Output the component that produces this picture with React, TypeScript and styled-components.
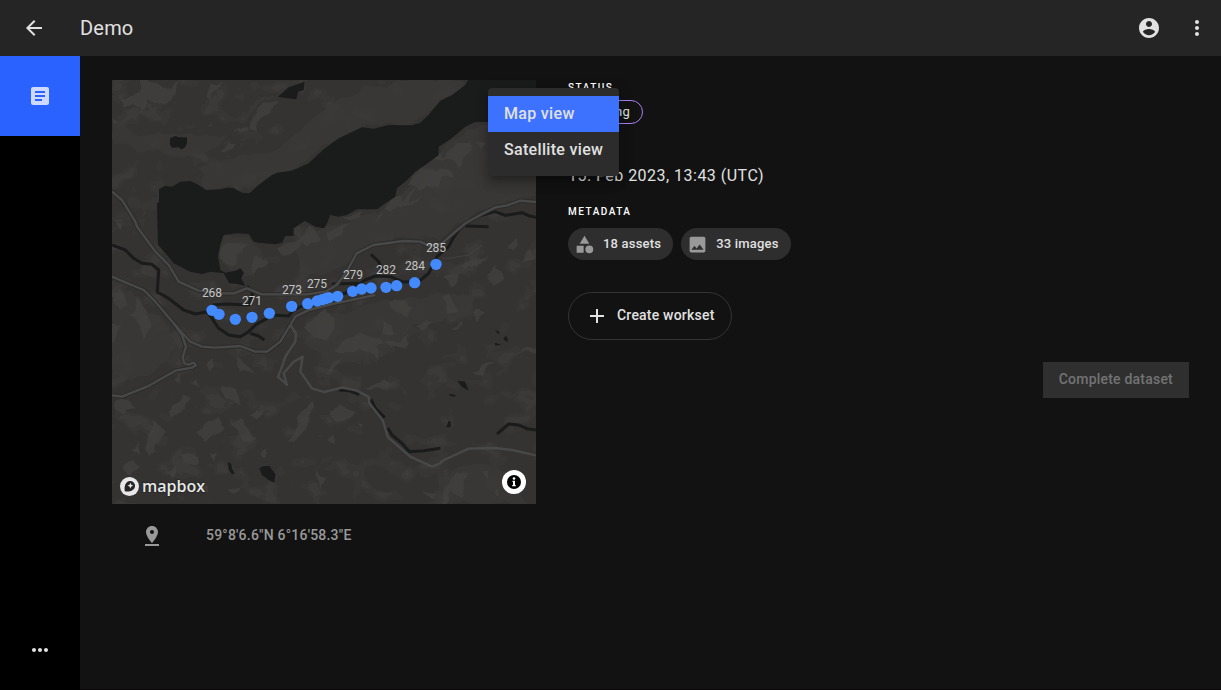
import React from 'react';
import styled, { createGlobalStyle } from 'styled-components';

const GlobalStyle = createGlobalStyle`
  * { box-sizing: border-box; }
  body {
    margin: 0;
    background: #121212;
    color: #e1e1e1;
    font-family: Roboto, sans-serif;
  }
  button { font-family: inherit; cursor: pointer; }
`;

const ICONS = {
  back: 'M20 11H7.83l5.59-5.59L12 4l-8 8 8 8 1.41-1.41L7.83 13H20v-2z',
  account:
    'M12 2C6.48 2 2 6.48 2 12s4.48 10 10 10 10-4.48 10-10S17.52 2 12 2zm0 3c1.66 0 3 1.34 3 3s-1.34 3-3 3-3-1.34-3-3 1.34-3 3-3zm0 14.2c-2.5 0-4.71-1.28-6-3.22.03-1.99 4-3.08 6-3.08 1.99 0 5.97 1.09 6 3.08-1.29 1.94-3.5 3.22-6 3.22z',
  moreVert:
    'M12 8c1.1 0 2-.9 2-2s-.9-2-2-2-2 .9-2 2 .9 2 2 2zm0 2c-1.1 0-2 .9-2 2s.9 2 2 2 2-.9 2-2-.9-2-2-2zm0 6c-1.1 0-2 .9-2 2s.9 2 2 2 2-.9 2-2-.9-2-2-2z',
  moreHoriz:
    'M6 10c-1.1 0-2 .9-2 2s.9 2 2 2 2-.9 2-2-.9-2-2-2zm12 0c-1.1 0-2 .9-2 2s.9 2 2 2 2-.9 2-2-.9-2-2-2zm-6 0c-1.1 0-2 .9-2 2s.9 2 2 2 2-.9 2-2-.9-2-2-2z',
  article:
    'M19 3H5c-1.1 0-2 .9-2 2v14c0 1.1.9 2 2 2h14c1.1 0 2-.9 2-2V5c0-1.1-.9-2-2-2zm-5 14H7v-2h7v2zm3-4H7v-2h10v2zm0-4H7V7h10v2z',
  category: 'M12 2l-5.5 9h11zM17.5 13a4.5 4.5 0 1 0 0 9 4.5 4.5 0 0 0 0-9zM3 13.5h8v8H3z',
  image:
    'M21 19V5c0-1.1-.9-2-2-2H5c-1.1 0-2 .9-2 2v14c0 1.1.9 2 2 2h14c1.1 0 2-.9 2-2zM8.5 13.5l2.5 3.01L14.5 12l4.5 6H5l3.5-4.5z',
  plus: 'M19 13h-6v6h-2v-6H5v-2h6V5h2v6h6v2z',
  pin: 'M18 8c0-3.31-2.69-6-6-6S6 4.69 6 8c0 4.5 6 11 6 11s6-6.500 6-11zm-8 0c0-1.1.9-2 2-2s2 .9 2 2-.89 2-2 2c-1.1 0-2-.9-2-2zM5 20v2h14v-2H5z',
};

const Icon = ({ name, size = 24 }: { name: keyof typeof ICONS; size?: number }) => (
  <svg width={size} height={size} viewBox="0 0 24 24" fill="currentColor" aria-hidden="true">
    <path d={ICONS[name]} />
  </svg>
);

const Page = styled.div`
  min-height: 100vh;
  display: flex;
  flex-direction: column;
`;

const TopBar = styled.header`
  display: flex;
  align-items: center;
  height: 56px;
  padding-left: 10px;
  background: #252525;
`;

const Title = styled.h1`
  flex: 1;
  margin: 0 0 0 22px;
  font-size: 20px;
  line-height: 32px;
  font-weight: 400;
  letter-spacing: 0.01em;
`;

const IconButton = styled.button`
  display: grid;
  place-items: center;
  width: 48px;
  height: 48px;
  padding: 0;
  border: 0;
  border-radius: 50%;
  background: none;
  color: #e1e1e1;
`;

const Body = styled.div`
  flex: 1;
  display: flex;
`;

const Rail = styled.nav`
  flex: none;
  width: 80px;
  display: flex;
  flex-direction: column;
  justify-content: space-between;
  background: #000;
`;

const RailItem = styled.button<{ $active?: boolean }>`
  display: grid;
  place-items: center;
  height: 80px;
  padding: 0;
  border: 0;
  background: ${(p) => (p.$active ? '#2962ff' : 'transparent')};
  color: ${(p) => (p.$active ? '#cdd9ff' : '#e1e1e1')};
`;

const Main = styled.main`
  flex: 1;
  display: grid;
  grid-template-columns: minmax(0, 424px) minmax(0, 1fr);
  align-items: start;
  gap: 32px;
  padding: 24px 32px;
  border-bottom: 1px solid #0a0708;
`;

const MapFrame = styled.div`
  position: relative;
`;

const MapCanvas = styled.svg`
  display: block;
  width: 100%;
  height: auto;
`;

const MapboxLink = styled.a`
  position: absolute;
  left: 8px;
  bottom: 8px;
  display: flex;
  align-items: flex-end;
  gap: 3px;
  color: #e8e8e8;
  text-decoration: none;
  font: 600 16px/20px 'Open Sans', sans-serif;
  text-shadow: 0 0 2px #111;
`;

const InfoButton = styled.button`
  position: absolute;
  right: 10px;
  bottom: 10px;
  width: 24px;
  height: 24px;
  padding: 0;
  border: 0;
  border-radius: 12px;
  background: #fff;
`;

const Menu = styled.div`
  position: absolute;
  z-index: 1;
  top: 8px;
  left: calc(100% - 48px);
  display: flex;
  flex-direction: column;
  padding: 8px 0;
  border-radius: 4px;
  background: #2c2c2c;
  box-shadow: 0 5px 5px -3px rgba(0, 0, 0, 0.2), 0 8px 10px 1px rgba(0, 0, 0, 0.14),
    0 3px 14px 2px rgba(0, 0, 0, 0.12);
`;

const MenuItem = styled.button<{ $selected?: boolean }>`
  height: 36px;
  padding: 0 16px;
  border: 0;
  background: ${(p) => (p.$selected ? '#3d71ff' : 'transparent')};
  color: #e1e1e1;
  font-size: 16px;
  line-height: 24px;
  font-weight: 500;
  letter-spacing: 0.02em;
  text-align: left;
  white-space: nowrap;
`;

const Label = styled.span`
  padding-bottom: 2px;
  font-size: 14px;
  line-height: 18px;
  font-weight: 500;
  letter-spacing: 0.015em;
`;

const Position = styled.div`
  display: flex;
  align-items: center;
  gap: 42px;
  height: 64px;
  padding-left: 28px;
  color: #999;
`;

const Details = styled.section`
  display: flex;
  flex-direction: column;
  align-items: flex-start;
`;

const Overline = styled.h2`
  margin: 0;
  color: #fff;
  font-size: 10px;
  line-height: 16px;
  font-weight: 500;
  letter-spacing: 0.15em;
  text-transform: uppercase;
`;

const StatusChip = styled.span`
  height: 24px;
  margin-top: 4px;
  padding: 0 12px;
  border: 1px solid #a780f0;
  border-radius: 12px;
  font-size: 13px;
  line-height: 22px;
  letter-spacing: 0.02em;
`;

const Captured = styled.time`
  margin: 40px 0 16px;
  font-size: 16px;
  line-height: 24px;
  letter-spacing: 0.03em;
`;

const ChipRow = styled.div`
  display: flex;
  flex-wrap: wrap;
  gap: 8px;
  margin-top: 8px;
`;

const Chip = styled.span`
  display: flex;
  align-items: center;
  gap: 8px;
  height: 32px;
  padding: 0 12px 0 6px;
  border-radius: 16px;
  background: #2e2e2e;
  font-size: 13px;
  line-height: 18px;
  font-weight: 500;
  letter-spacing: 0.015em;
  svg { color: #999; }
`;

const CreateButton = styled.button`
  display: flex;
  align-items: center;
  gap: 8px;
  height: 48px;
  margin-top: 32px;
  padding: 0 16px;
  border: 1px solid #333;
  border-radius: 24px;
  background: none;
  color: #e1e1e1;
`;

const CompleteButton = styled.button`
  display: flex;
  align-items: center;
  align-self: flex-end;
  height: 36px;
  margin-top: 22px;
  padding: 0 16px;
  border: 0;
  background: #2f2f2f;
  color: #737373;
  cursor: default;
`;

const LAKES = [
  '141,328 160,318 180,320 205,305 235,303 255,312 282,330 325,328 345,323 365,324 390,338 412,340 440,315 480,285 495,278 540,272 590,250 636,207 680,175 750,142 785,146 830,135 900,136 925,128 950,105 985,62 1020,45 1060,15 1068,0 1272,0 1272,126 1090,126 1060,140 1015,178 980,200 980,225 940,255 910,275 880,305 855,325 850,350 820,370 795,388 735,388 705,405 680,410 655,405 645,430 636,445 610,440 578,423 545,445 545,468 520,468 510,488 490,493 440,488 425,485 410,462 375,460 335,465 325,495 318,530 325,570 340,578 370,572 385,565 396,578 388,595 400,618 375,612 352,610 335,580 295,575 270,582 235,575 185,550 165,525 138,495 135,370 141,366',
  '174,175 190,168 200,172 225,172 225,190 218,203 208,208 200,202 180,203 174,195',
  '498,50 530,22 578,5 575,30 558,35 553,58 520,54',
  '442,1165 455,1158 472,1158 490,1183 487,1208 470,1200 450,1185',
  '348,1146 358,1152 360,1166 368,1180 360,1183 350,1170',
  '1035,904 1058,904 1070,932 1050,920',
  '1010,942 1030,944 1030,950 1015,948',
  '1010,1022 1016,1026 1016,1042 1003,1042',
  '1149,750 1163,755 1159,763',
  '1180,768 1187,775 1187,787 1174,778',
  '1149,788 1168,794 1150,797',
];

const RIVERS = [
  'M0 495L40 510 65 535 90 550 120 553 140 570 136 636 170 655 215 690 250 702 285 695 300 715 320 745 350 765 385 770 410 755 430 735 465 715 480 705 530 708 545 690 600 665 650 652 700 640 760 600 790 588 836 590 870 605 920 605 950 580 975 530 1010 500 1030 460 1055 435 1100 408 1150 395 1180 406 1230 398 1250 407 1272 412',
  'M300 675L340 672 410 675 422 640 405 618',
  'M415 760L440 768 457 780M660 612L740 610M777 523L800 545 812 575',
  'M1060 438L1130 440M1020 480L1040 450',
  'M680 930L710 932 742 944',
  'M777 958L790 985 818 1013',
  'M827 1044L840 1065 870 1090 892 1115 935 1112 985 1105',
  'M1155 1062L1190 1032 1220 1035 1245 1046 1272 1050',
];

const ROADS = [
  'M0 335L30 360 70 425 75 440 130 515 170 555 200 605 260 632 330 640 366 640 404 625 449 643 584 643 640 635 674 615 704 575 734 520 784 495 874 483 924 485 950 497 990 490 1030 455 1060 430 1110 402 1150 382 1185 376 1225 362 1272 366',
  'M0 590L95 630 130 665 185 730 210 765 222 800 212 832 217 850 230 854 246 848 252 856 240 863 190 872 105 920 30 950 0 946',
  'M185 730L205 752 235 785 270 800 310 803 385 798 430 815 465 815 505 785 535 735 550 710 590 690 670 670 790 645',
];

const TRACKS = [
  'M535 735L552 760 550 785 520 830 510 860 498 890 525 915 515 880 545 845 572 830 565 875 600 925 636 936 690 923 735 932 770 950 772 970 812 1020 828 1072 895 1130 960 1160 985 1150 990 1143 1070 1106 1150 1104 1200 1110 1272 1126',
];

/* Hill shading facets, ordered from broad and faint to small and bright. */
const SLOPES = [
  'M0 190L90 210 210 240 300 205 400 110 500 40 440 60 350 160 260 170 130 155 60 160 0 120Z',
  'M250 260L340 240 480 215 636 90 760 20 900 0 1060 0 1020 40 950 95 900 130 760 140 636 200 540 265 480 280 410 335 340 318 285 325Z',
  'M560 470L800 400 900 300 1000 200 1070 140 1272 140 1272 350 1180 365 1040 430 990 470 880 475 760 490 700 560 560 600Z',
  'M335 470L405 468 425 495 450 520 440 560 390 600 345 570 325 540Z',
  'M0 670L60 640 110 690 170 740 190 800 150 860 60 900 0 880Z',
  'M590 710L800 670 960 640 1100 650 1060 710 900 740 860 800 750 850 640 850 580 790Z',
  'M970 1272L980 1190 1040 1160 1140 1160 1200 1190 1250 1272Z',
];

const FACETS = [
  'M20 60L60 45 85 35 80 0 130 10 180 30 205 0 200 35 160 75 110 60 100 85 60 70 30 85Z',
  'M290 55L295 20 320 0 305 30 297 60Z M280 135L305 128 290 140Z M0 120L12 138 0 145Z',
  'M320 215L345 185 368 195 350 207 325 220Z M365 170L400 135 410 148 385 165Z M410 145L425 105 465 70 495 62 480 90 445 115 430 150Z',
  'M325 540L340 500 370 485 400 490 380 520 360 560Z M415 560L430 520 455 530 470 545 440 560 425 580Z M490 520L540 490 580 470 560 510 520 530Z M560 470L590 450 620 480 590 500Z',
  'M15 415L28 425 38 405 30 440 15 430Z M85 390L92 405 88 412Z',
  'M640 470L690 440 720 420 700 455 650 485Z M700 410L740 400 730 425Z M780 420L820 385 810 400Z',
  'M820 380L850 345 870 355 900 320 890 370 930 360 900 380 860 370 840 390Z M880 310L930 275 970 270 1010 275 1025 290 990 300 970 330 940 310 910 340 900 320Z M965 235L985 215 1005 240Z M1000 235L1030 190 1070 185 1080 220 1050 240 1035 265 1020 240Z M1090 200L1120 185 1110 215Z',
  'M0 650L30 640 50 670 20 690Z M60 700L80 650 110 690 115 745 85 790 78 745Z M0 725L20 740 15 780 0 790Z',
  'M10 970L50 960 75 985 40 1020 10 990Z M105 1085L120 1020 140 1040 160 1060 130 1085 140 1110 115 1130Z M60 1100L85 1090 80 1120Z',
  'M170 995L210 955 235 950 220 995 180 1010Z M250 1065L285 1030 320 1010 330 1040 300 1065 270 1090Z M340 915L370 925 390 975 360 960 330 930Z M350 1020L380 1015 420 1055 430 1085 390 1080Z M410 1000L430 980 455 1000 435 1020Z',
  'M280 850L300 835 310 865 290 870Z M380 830L400 845 425 880 385 880Z M185 900L215 890 200 915Z M235 910L260 895 270 915Z',
  'M530 1080L560 1010 605 960 610 985 570 1050 550 1090Z M440 1110L470 1100 460 1125Z M290 1115L325 1110 310 1145Z M210 1130L245 1120 255 1150 225 1160Z',
  'M40 1160L60 1140 80 1170 60 1190Z M160 1170L200 1160 180 1200Z M250 1225L280 1210 290 1245Z M350 1225L390 1215 370 1245Z M610 1180L636 1190 620 1230Z',
  'M580 740L610 710 640 690 670 720 660 760 640 790 600 780Z M660 820L700 780 740 760 800 770 815 795 790 800 800 835 770 815 720 820Z',
  'M830 670L860 650 900 680 890 710 850 700Z M990 650L1010 640 1035 690 1015 700Z M810 720L840 735 850 755 815 750Z M815 780L850 790 895 765 870 800 830 810Z M910 745L945 720 960 725 930 755Z',
  'M1010 740L1045 730 1050 740 1015 742Z M1080 700L1100 690 1120 695 1095 720Z M765 925L805 905 850 905 820 925 780 930Z M875 920L885 930 890 950Z M1070 870L1110 855 1150 850 1110 875Z',
  'M1200 820L1240 810 1272 805 1272 820Z M650 860L690 830 680 850 640 885Z M650 1000L690 985 740 1000 700 1020 670 1030Z M640 1080L670 1070 680 1085Z M740 1035L755 1030 750 1050Z',
  'M990 1272L1000 1220 1030 1180 1065 1185 1060 1230 1045 1260 1020 1230 1010 1272Z M1110 1180L1125 1170 1130 1195Z M1140 1240L1150 1220 1160 1260Z M940 1240L980 1230 965 1260Z M870 1180L890 1170 880 1190Z',
  'M1050 560L1090 530 1130 520 1110 545 1060 575Z M1180 500L1210 480 1205 520Z M1130 580L1150 560 1170 600 1140 620Z M1000 600L1040 580 1020 620Z M1230 540L1265 510 1272 540Z',
];

const POINTS = [
  [300, 691], [321, 703], [370, 718], [420, 712], [472, 700], [539, 679], [587, 671],
  [616, 663], [630, 659], [640, 656], [650, 653], [677, 649], [722, 634], [749, 627],
  [777, 624], [822, 622], [854, 617], [908, 608], [972, 553],
];

const LABELS: [string, number, number][] = [
  ['268', 100, 217],
  ['271', 140, 225],
  ['273', 180, 214],
  ['275', 205, 208],
  ['279', 241, 199],
  ['282', 274, 194],
  ['284', 303, 190],
  ['285', 324, 172],
];

const TerrainMap = () => (
  <MapCanvas viewBox="0 0 424 424" role="img" aria-label="Map of the dataset">
    <defs>
      <filter id="roughen" x="0" y="0" width="100%" height="100%" colorInterpolationFilters="sRGB">
        <feTurbulence type="fractalNoise" baseFrequency="0.05" numOctaves="2" seed="4" />
        <feDisplacementMap in="SourceGraphic" scale="14" xChannelSelector="R" yChannelSelector="G" />
      </filter>
      <filter id="mottle" x="0" y="0" width="100%" height="100%" colorInterpolationFilters="sRGB">
        <feTurbulence type="fractalNoise" baseFrequency="0.035 0.045" numOctaves="3" seed="11" />
        <feColorMatrix values="0 0 0 0 0.26  0 0 0 0 0.255  0 0 0 0 0.25  1 0 0 0 0" />
        <feComponentTransfer>
          <feFuncA type="discrete" tableValues="0 0 0 0 0 0 0.25 0.5 0.5 0.5" />
        </feComponentTransfer>
      </filter>
    </defs>
    <rect width="424" height="424" fill="#343332" />
    <rect width="424" height="424" filter="url(#mottle)" />
    <g filter="url(#roughen)">
      <g transform="scale(0.33333333)">
        <g fill="#3b3a38" opacity="0.7">
          {SLOPES.map((d) => <path key={d} d={d} />)}
        </g>
        <g fill="#434240" opacity="0.7">
          {FACETS.map((d) => <path key={d} d={d} />)}
        </g>
      </g>
    </g>
    <g transform="scale(0.33333333)" strokeLinejoin="round" fill="none">
      <g fill="#1a1c1b">
        {LAKES.map((p) => <polygon key={p} points={p} />)}
      </g>
      <g stroke="#1a1c1b" strokeWidth="9">
        {RIVERS.map((d) => <path key={d} d={d} />)}
      </g>
      <g stroke="#2c2c2b" strokeWidth="13">
        {ROADS.map((d) => <path key={d} d={d} />)}
      </g>
      <g stroke="#484848" strokeWidth="7">
        {ROADS.map((d) => <path key={d} d={d} />)}
        {TRACKS.map((d) => <path key={d} d={d} />)}
      </g>
      <path d="M990 535L1010 535 1070 525 1110 495" stroke="#424140" strokeWidth="3" />
      <g fill="#448aff">
        {POINTS.map(([x, y]) => <circle key={x} cx={x} cy={y} r="17" />)}
      </g>
    </g>
    <g fill="#c4c4c4" fontFamily="Roboto, sans-serif" fontSize="12" textAnchor="middle">
      {LABELS.map(([text, x, y]) => <text key={text} x={x} y={y}>{text}</text>)}
    </g>
  </MapCanvas>
);

export default function App() {
  return (
    <Page>
      <GlobalStyle />
      <TopBar>
        <IconButton aria-label="Back"><Icon name="back" /></IconButton>
        <Title>Demo</Title>
        <IconButton aria-label="Account"><Icon name="account" /></IconButton>
        <IconButton aria-label="More options"><Icon name="moreVert" /></IconButton>
      </TopBar>
      <Body>
        <Rail>
          <RailItem $active aria-label="Overview"><Icon name="article" /></RailItem>
          <RailItem aria-label="More"><Icon name="moreHoriz" /></RailItem>
        </Rail>
        <Main>
          <div>
            <MapFrame>
              <TerrainMap />
              <MapboxLink href="#mapbox">
                <svg width="19" height="19" viewBox="0 0 19 19" aria-hidden="true">
                  <circle cx="9.500" cy="9.500" r="9.500" fill="#e8e8e8" />
                  <path d="M4.800 14.200C3.900 9.300 5.700 4.300 10 4.100c3 0 5 2.200 5 4.800 0 4.200-5 6.100-10.200 5.300z" fill="#252525" />
                  <path d="M10.400 5.800l.9 2 2 .9-2 .9-.9 2-.9-2-2-.9 2-.9z" fill="#e8e8e8" />
                </svg>
                mapbox
              </MapboxLink>
              <InfoButton aria-label="Map information">
                <svg width="24" height="24" viewBox="0 0 24 24" aria-hidden="true">
                  <circle cx="12" cy="12" r="7" fill="#000" />
                  <circle cx="12" cy="8.500" r="1.300" fill="#fff" />
                  <path d="M10.500 10.700H13v4.300h.8v1.300h-3.600V15h.8v-3h-.5z" fill="#fff" />
                </svg>
              </InfoButton>
              <Menu role="menu">
                <MenuItem role="menuitem" $selected>Map view</MenuItem>
                <MenuItem role="menuitem">Satellite view</MenuItem>
              </Menu>
            </MapFrame>
            <Position>
              <Icon name="pin" />
              <Label>59°8'6.6"N 6°16'58.3"E</Label>
            </Position>
          </div>
          <Details>
            <Overline>Status</Overline>
            <StatusChip>Pending</StatusChip>
            <Captured dateTime="2023-02-15T13:43Z">15. Feb 2023, 13:43 (UTC)</Captured>
            <Overline>Metadata</Overline>
            <ChipRow>
              <Chip><Icon name="category" size={21} />18 assets</Chip>
              <Chip><Icon name="image" size={21} />33 images</Chip>
            </ChipRow>
            <CreateButton><Icon name="plus" /><Label>Create workset</Label></CreateButton>
            <CompleteButton disabled><Label>Complete dataset</Label></CompleteButton>
          </Details>
        </Main>
      </Body>
    </Page>
  );
}
